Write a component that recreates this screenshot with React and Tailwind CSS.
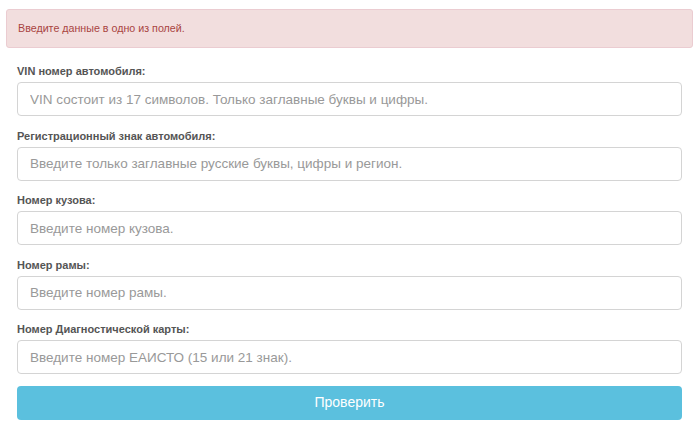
import React from "react";

const fields = [
  ["VIN номер автомобиля:", "VIN состоит из 17 символов. Только заглавные буквы и цифры."],
  ["Регистрационный знак автомобиля:", "Введите только заглавные русские буквы, цифры и регион."],
  ["Номер кузова:", "Введите номер кузова."],
  ["Номер рамы:", "Введите номер рамы."],
  ["Номер Диагностической карты:", "Введите номер ЕАИСТО (15 или 21 знак)."],
];

export default function App() {
  return (
    <div className="w-[700px] h-[445px] bg-white font-['Liberation_Sans',Arial,sans-serif]">
      <div className="pt-[9px] pl-[6px] pr-[7px]">
        <div className="h-[39px] flex items-center px-[11px] bg-[#f2dede] border border-[#ebccd1] rounded-[3px] text-[#a94442] text-[10.7px]">
          Введите данные в одно из полей.
        </div>
      </div>
      <div className="pl-[17px] pr-[18px] pt-[15px]">
        {fields.map(([label, ph]) => (
          <div key={label} className="h-[64.5px]">
            <div className="h-[17px] text-[11px] font-bold text-[#555] leading-[17px]">{label}</div>
            <input
              className="mt-[2px] w-full h-[34px] px-[12px] border border-[#d4d4d4] rounded-[4px] text-[13.5px] text-[#555] placeholder:text-[#999] outline-none"
              placeholder={ph}
            />
          </div>
        ))}
        <button className="mt-[0px] w-full h-[34px] rounded-[4px] bg-[#5bc0de] text-white text-[14px]">
          Проверить
        </button>
      </div>
    </div>
  );
}
